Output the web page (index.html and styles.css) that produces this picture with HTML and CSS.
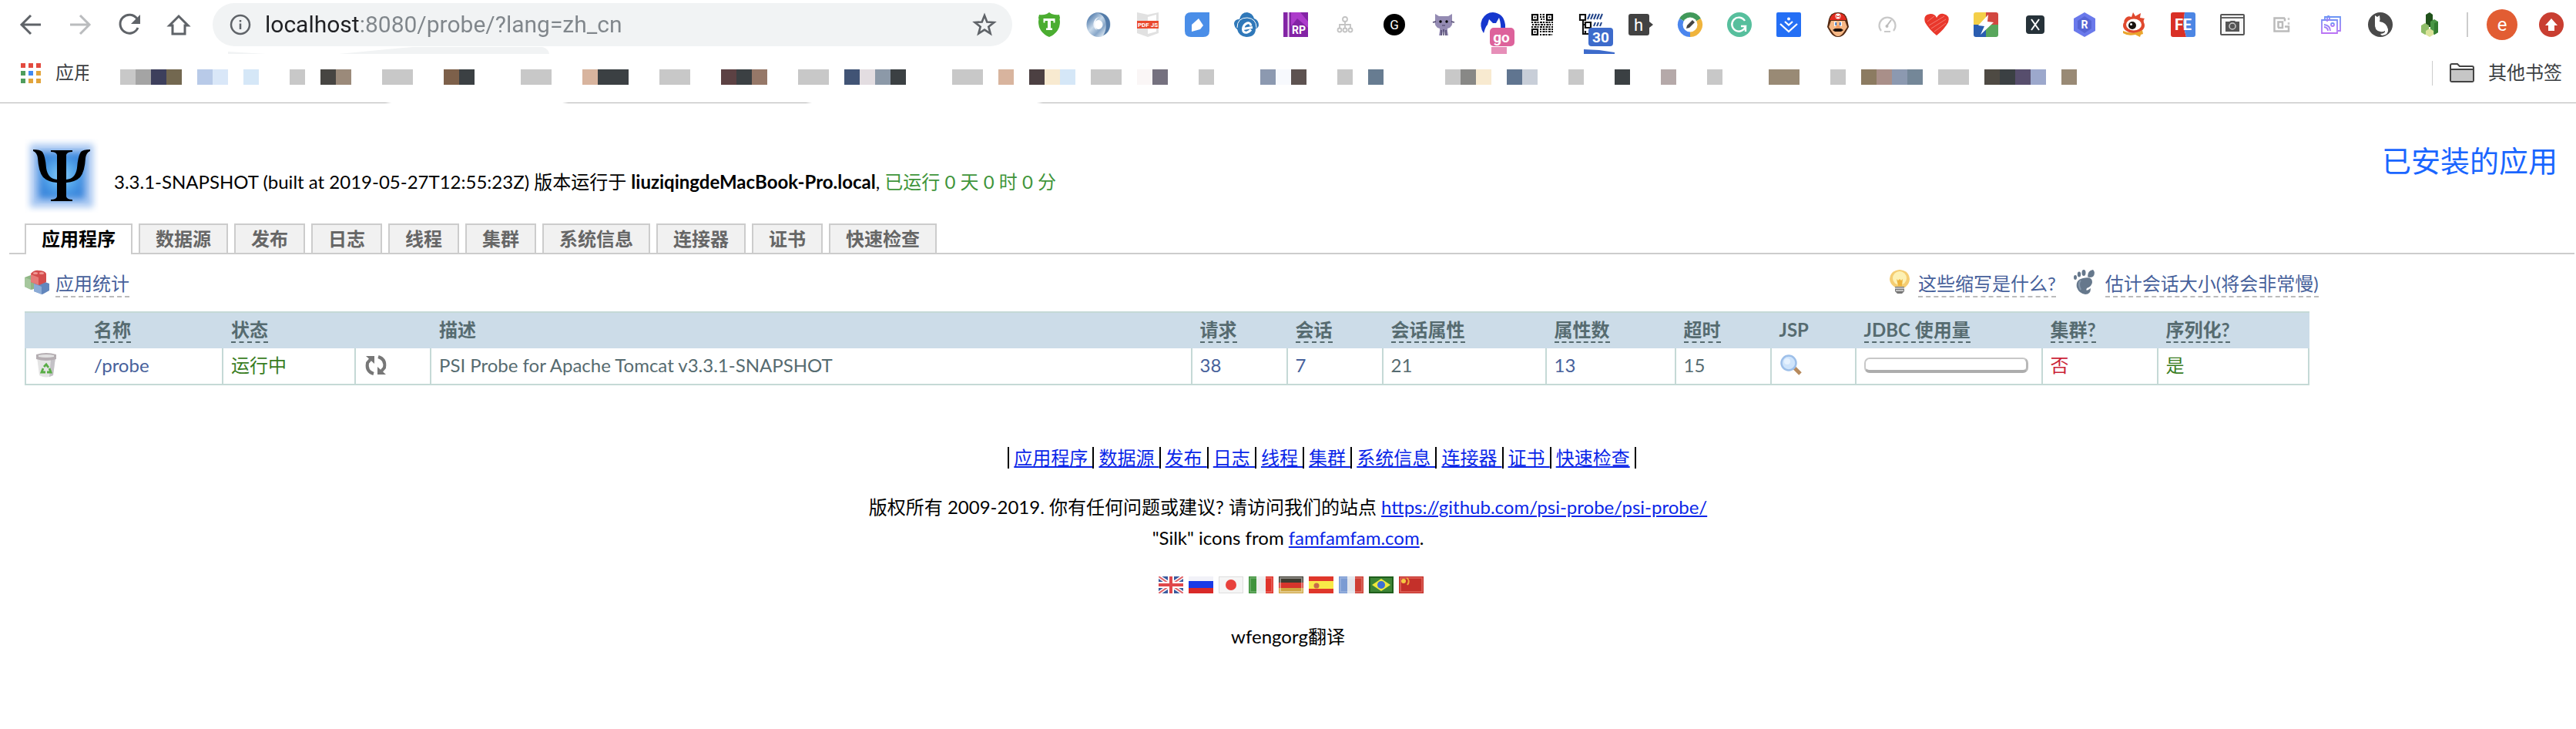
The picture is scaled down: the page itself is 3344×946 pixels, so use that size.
FILE: index.html
```html
<!DOCTYPE html>
<html lang="zh-CN">
<head>
<meta charset="utf-8">
<title>PSI Probe</title>
<link rel="stylesheet" href="styles.css">
</head>
<body>
<header class="browser">
  <div class="toolbar">
    <div class="nav-buttons">
      <button class="icon-btn" aria-label="后退"><svg width="32" height="32" viewBox="0 0 32 32"><path d="M29 16H5M16 4L4 16l12 12" fill="none" stroke="#5f6368" stroke-width="3"/></svg></button>
      <button class="icon-btn" aria-label="前进"><svg width="32" height="32" viewBox="0 0 32 32"><path d="M3 16h24M16 4l12 12-12 12" fill="none" stroke="#babcbe" stroke-width="3"/></svg></button>
      <button class="icon-btn" aria-label="刷新"><svg width="32" height="32" viewBox="0 0 32 32"><path d="M26 8.500A12 12 0 1 0 27 20" fill="none" stroke="#5f6368" stroke-width="3"/><path d="M30 3v12H18z" fill="#5f6368"/></svg></button>
      <button class="icon-btn" aria-label="主页"><svg width="32" height="32" viewBox="0 0 32 32"><path d="M4 17L16 5l12 12h-4v11H8V17z" fill="none" stroke="#5f6368" stroke-width="3"/></svg></button>
    </div>
    <div class="omnibox">
      <svg width="28" height="28" viewBox="0 0 28 28"><circle cx="14" cy="14" r="12" fill="none" stroke="#5f6368" stroke-width="2.500"/><path d="M14 12.500V20M14 8v2.500" stroke="#5f6368" stroke-width="2.500"/></svg>
      <input class="url" type="text" aria-label="地址" value="localhost:8080/probe/?lang=zh_cn">
      <button class="icon-btn" aria-label="收藏"><svg width="32" height="32" viewBox="0 0 32 32"><path d="M16 4l3.300 8.500 9.100.5-7.100 5.700 2.400 8.900L16 22.600l-7.700 5 2.400-8.900L3.600 13l9.100-.5z" fill="none" stroke="#5f6368" stroke-width="2.600"/></svg></button>
      <svg class="smudge" width="418" height="10" viewBox="0 0 418 10"><path d="M0 6l49 3H0zM144 9L222 1.500 240 0H408q8 2 9 9z" fill="#f1f3f4"/></svg>
    </div>
    <div class="extensions">
      <svg viewBox="0 0 32 32"><path d="M16 0l3 2q6 2 10 1l1 4q-1 2 0 5 0 14-14 20Q2 26 2 12q1-3 0-5l1-4q5 1 10-1z" fill="#4bad31"/><path d="M8.500 8h15v5.500H21.500V11h-3.500v9.500h2V23h-8v-2.500h2V11h-3.500v2.500H8.500z" fill="#fff"/></svg>
      <svg viewBox="0 0 32 32"><defs><linearGradient id="jr" x1="0" y1="0" x2="1" y2="1"><stop offset="0" stop-color="#5f86b3"/><stop offset=".4" stop-color="#c9daea"/><stop offset=".7" stop-color="#88a7c9"/><stop offset="1" stop-color="#dfeaf3"/></linearGradient></defs><ellipse cx="16" cy="16" rx="10.500" ry="11" fill="none" stroke="url(#jr)" stroke-width="10"/><path d="M17 6c-6 3-7 12-3 17-7-3-6-15 3-17z" fill="#f1f6fb"/><path d="M16 1c9-1 15 6 15 15 0 7-4 12-9 14 6-8 6-24-6-29z" fill="#537ba8"/></svg>
      <svg viewBox="0 0 32 32"><path d="M2 0l14 3L30 0v27l-14 5L2 27z" fill="#e1e1e1"/><path d="M16 6l11-3v22l-11 3z" fill="#fff"/><rect x="2" y="11" width="28" height="10" fill="#ea4a2e"/><text x="16" y="19" class="svg-t" font-size="8">PDF JS</text></svg>
      <svg viewBox="0 0 32 32"><path d="M8 0h24v24q0 8-8 8H8q-8 0-8-8V8q0-8 8-8z" fill="#4a8ee8"/><path d="M9 16l9-8 6 9-4 5-11 3z" fill="#fff"/></svg>
      <svg viewBox="0 0 32 32"><path d="M7 9Q9 0 17 0q7 1 9 8 6 2 6 9-1 4-4 4 0 11-12 11Q6 31 4 22 0 19 0 14q1-5 7-5z" fill="#2f78b9"/><path d="M4 20Q4 7 17 7q12 1 12 13" fill="none" stroke="#fff" stroke-width="1"/><path d="M22 17.500q-1-4.500-5-3.500-5 2-5.500 8 0 5 5.500 4 3-1 5-3.500M12 21.500l12-2" fill="none" stroke="#fff" stroke-width="3"/></svg>
      <svg viewBox="0 0 32 32"><path d="M0 0h32v32H0z" fill="#8324a5"/><path d="M10 0h12l10 12v8L18 8 10 18z" fill="#ad3ccb"/><path d="M5.500 0h2v32h-2z" fill="#f0d8f5"/><text x="20" y="28" class="svg-t" font-size="14">RP</text></svg>
      <svg viewBox="0 0 32 32"><g fill="none" stroke="#c3c3c3" stroke-width="1.800"><circle cx="16" cy="9" r="3"/><circle cx="9" cy="23" r="2.500"/><circle cx="16" cy="23" r="2.500"/><circle cx="23" cy="23" r="2.500"/><path d="M16 12v8M9 20v-4h14v4"/></g></svg>
      <svg viewBox="0 0 32 32"><circle cx="16" cy="16" r="14" fill="#000"/><text x="16" y="22" class="svg-t light" font-size="17">G</text></svg>
      <svg viewBox="0 0 32 32"><path d="M5 2l5 3h12l5-3v8q2 9-6 11v3l1 6h-4l-1-5h-2l-1 5h-4l1-6v-3Q3 19 5 10z" fill="#948bb3"/><path d="M13 23v7M16 22v8M19 23v7M2 13l4-1M26 12l4 1" stroke="#50486f" stroke-width="1.500"/><circle cx="12" cy="12" r="1.700"/><circle cx="20" cy="12" r="1.700"/><path d="M14 17h4" stroke="#443c60"/></svg>
      <svg viewBox="0 0 32 32"><path d="M4 27Q-2 18 2 9 7 0 16 0q14 1 16 16v5H6z" fill="#1637ce"/><path d="M6 26q-1-6 3-10l2-7 5 5h4l4-7q3 8 2 19z" fill="#fff"/><rect x="12" y="20" width="32" height="24" rx="5" fill="#dd629b"/><path d="M14 45h20v9H14z" fill="#e68eb8"/><text x="27" y="39" class="svg-t" font-size="19">go</text></svg>
      <svg viewBox="0 0 32 32"><g fill="none" stroke="#000" stroke-width="2.200"><path d="M3 3h7v7H3zM22 3h7v7h-7zM3 22h7v7H3z"/><path stroke-dasharray="2 1.500 3 1" d="M13 3h6M13 6h6M14 9h5M2 13h28M3 16h27M2 19h28M13 22h17M13 25h17M13 29h16"/></g><path d="M5.500 5.500h2v2h-2zM24.500 5.500h2v2h-2zM5.500 24.500h2v2h-2z"/></svg>
      <svg viewBox="0 0 32 32"><g fill="none" stroke="#111" stroke-width="2.200"><path d="M1 3h7v7H1zM8 13h7v7H8zM5 10v18h7M5 16h3M8 24v4"/></g><g stroke="#1f4287" stroke-width="2"><path d="M11 9l3-7M15 9l3-7M19 9l3-7M23 9l3-7M27 9l3-7M19 18l2-5M23 18l2-5M27 18l2-5"/></g><rect x="12" y="20" width="32" height="24" rx="4" fill="#3d6bcb"/><path d="M6 48l20 1 20 3v2H6z" fill="#3d6bcb"/><text x="28" y="39" class="svg-t" font-size="19">30</text></svg>
      <svg viewBox="0 0 32 32"><path d="M3 2h21q3 0 3 3v7l5 4-5 4v7q0 3-3 3H3q-3 0-3-3V5q0-3 3-3z" fill="#424242"/><text x="13" y="24" class="svg-t light" font-size="22">h</text></svg>
      <svg viewBox="0 0 32 32"><path d="M16 16L2.100 8A16 16 0 0 1 29.900 8z" fill="#41995a"/><path d="M16 16L29.900 8A16 16 0 0 1 16 32z" fill="#f0b43c"/><path d="M16 16v16A16 16 0 0 1 2.100 8z" fill="#4b86ee"/><circle cx="16" cy="16" r="9.500" fill="#fff"/><path d="M11 21l1-4 7-7 3 3-7 7z" fill="#444"/></svg>
      <svg viewBox="0 0 32 32"><circle cx="16" cy="16" r="16" fill="#57bf9d"/><path d="M23 11a9 9 0 1 0 1 7h-6M24 17v8" fill="none" stroke="#fff" stroke-width="2.400"/></svg>
      <svg viewBox="0 0 32 32"><rect width="32" height="32" rx="2" fill="#246ff5"/><circle cx="16" cy="8.500" r="2" fill="#fff"/><path d="M11 12l5 4.500 5-4.500M5 15l11 10 11-10" fill="none" stroke="#fff" stroke-width="2.200"/></svg>
      <svg viewBox="0 0 32 32"><path d="M16 0q10 0 12 9l2 10-4 7q-4 6-10 6T6 26l-4-7 2-10Q6 0 16 0z" fill="#542a12"/><path d="M16 1q9 0 11 9H5Q7 1 16 1z" fill="#e22a1e"/><circle cx="16" cy="5" r="3.500" fill="#fff"/><path d="M14 7V4l2 2 2-2v3" fill="none" stroke="#e22a1e"/><path d="M7 11h18l3 8-4 6q-4 6-8 6t-8-6l-4-6z" fill="#f6b785"/><path d="M11 12h3v6h-3zM18 12h3v6h-3z" fill="#fff"/><path d="M12.500 13h1.500v4h-1.500zM18 13h1.500v4H18z" fill="#175bb6"/><path d="M9 23l3-2h8l3 2-3 2h-8z" fill="#1d100a"/><ellipse cx="16" cy="19" rx="3" ry="2" fill="#ee9c65"/></svg>
      <svg viewBox="0 0 32 32"><path d="M8 24a10.500 10.500 0 1 1 16 0M12 25h8" fill="none" stroke="#c9c9c9" stroke-width="2.200"/><path d="M15 18l6-8" stroke="#bbb" stroke-width="2"/><circle cx="15.500" cy="18" r="2" fill="#bbb"/></svg>
      <svg viewBox="0 0 32 32"><path d="M16 30Q6 22 1 13-2 3 8 2q6 0 8 5 3-6 9-5 9 2 6 11-5 9-15 17z" fill="#e9382c"/><path d="M4 12l9-7M6 17L26 5M9 21l19-12M13 25l15-11" stroke="#f58c84" stroke-width=".8"/></svg>
      <svg viewBox="0 0 32 32"><path d="M3 0h13v16H0V3q0-3 3-3z" fill="#f4cf48"/><path d="M16 0h13q3 0 3 3v13H16z" fill="#d24740"/><path d="M0 16h16v16H3q-3 0-3-3z" fill="#2a5db0"/><path d="M16 16h16v13q0 3-3 3H16z" fill="#58a65c"/><path d="M19 3L6 17l8 1-5 11L26 13l-8-1z" fill="#fff"/></svg>
      <svg viewBox="0 0 32 32"><rect x="4" y="4" width="24" height="24" rx="4" fill="#263239"/><path d="M11 9l10 14M21 9L11 23" stroke="#fff" stroke-width="2"/></svg>
      <svg viewBox="0 0 32 32"><path d="M16 0l14 8v16l-14 8L2 24V8z" fill="#6a79eb"/><path d="M16 5l9 6v10l-9 6-9-6V11z" fill="#5564d4"/><text x="16" y="21" class="svg-t" font-size="14">R</text></svg>
      <svg viewBox="0 0 32 32"><path d="M3 12Q6 3 13 6l2-6 3 5 7-4-1 6 6 1q-2 2-1 6z" fill="#e0492e"/><ellipse cx="16" cy="17" rx="14" ry="10" fill="#e0492e"/><ellipse cx="16" cy="16" rx="10" ry="7.500" fill="#fff"/><circle cx="14" cy="17" r="5" fill="#191311"/><circle cx="12.500" cy="15.500" r="1.500" fill="#fff"/><path d="M2 24q13 6 25-1l1 5-3 1-1 3-6-3Q8 31 2 27z" fill="#eaa52c"/></svg>
      <svg viewBox="0 0 32 32"><path d="M3 0h15l-2 16 4 16H3q-3 0-3-3V3q0-3 3-3z" fill="#d93026"/><path d="M18 0h11q3 0 3 3v26q0 3-3 3h-9l-4-16z" fill="#4c86e4"/><text x="16" y="23" class="svg-t" font-size="20">FE</text></svg>
      <svg viewBox="0 0 32 32"><rect x="1" y="3" width="30" height="26" rx="1" fill="#f6f6f6" stroke="#555" stroke-width="2"/><path d="M2 7h28" stroke="#666" stroke-width="2"/><path d="M7 12h5l2-1h5l1 1h5v13H7z" fill="#555"/><circle cx="16" cy="18" r="4" fill="none" stroke="#ccc" stroke-width="1.500"/></svg>
      <svg viewBox="0 0 32 32"><path d="M20 7.500H6.500v17H25V18.500H20M20 7.500v4M11.500 20v-7.500h5.500v7.500H11" fill="none" stroke="#bbb" stroke-width="2.500"/><path d="M25 7v3M25 13v3" stroke="#ccc" stroke-width="2.500"/></svg>
      <svg viewBox="0 0 32 32"><defs><linearGradient id="pu" x1="0" y1="0" x2="0" y2="1"><stop offset="0" stop-color="#6b95f5"/><stop offset="1" stop-color="#bb73f5"/></linearGradient></defs><g fill="none" stroke="url(#pu)" stroke-width="1.800"><path d="M4 10h20v17H4zM8 9V6h20v18h-3M7 19q5 1 5 5M7 16q8 1 8 8"/><circle cx="18" cy="16" r="2"/><path d="M11 12V6q2-2 3 0v5"/></g></svg>
      <svg viewBox="0 0 32 32"><circle cx="16" cy="16" r="16" fill="#4a4a4a"/><path d="M9 4l3 2 3-2q1 5 0 8 9 1 11 10 1 7-8 8l-2-2q7-1 6-4-3 2-6 1Q8 24 9 14z" fill="#fff"/></svg>
      <svg viewBox="0 0 32 32"><path d="M11 3l5-3 4 3v16h-9z" fill="#20521b"/><path d="M17 12l5-3 5 3v14l-5 3-5-3z" fill="#499645"/><path d="M22 14l5-2v14l-5 3z" fill="#337c31"/><path d="M5 17l5-3 5 3v10l-5 2-5-3z" fill="#8fbd68"/><path d="M11 24l5-3 5 3v5l-5 3-5-3z" fill="#dbe39a"/></svg>
    </div>
    <div class="profile">
      <button class="avatar" aria-label="用户">e</button>
      <button class="icon-btn" aria-label="更新"><svg width="32" height="32" viewBox="0 0 32 32"><circle cx="16" cy="16" r="16" fill="#c93e31"/><path d="M16 8l8 9h-4v7h-8v-7H8z" fill="#fff"/></svg></button>
    </div>
  </div>
  <div class="bookmarks">
    <svg class="apps" width="26" height="26" viewBox="0 0 26 26"><path d="M0 0h6v6H0zM10 0h6v6h-6zM20 0h6v6h-6z" fill="#e34a3f"/><path d="M0 10h6v6H0zM0 20h6v6H0z" fill="#4f9d5d"/><path d="M10 10h6v6h-6z" fill="#4189f0"/><path d="M20 10h6v6h-6zM10 20h6v6h-6zM20 20h6v6h-6z" fill="#e2a43b"/></svg>
    <a class="apps-label" href="#">应用</a>
    <div class="mosaic">
      <svg width="2540" height="20" viewBox="0 0 127 1" preserveAspectRatio="none" shape-rendering="crispEdges">
        <path fill="#c8c8c8" d="M0 0h1v1H0zM11 0h1v1h-1zM17 0h2v1h-2zM26 0h2v1h-2zM35 0h2v1h-2zM44 0h2v1h-2zM54 0h2v1h-2zM63 0h2v1h-2zM70 0h1v1h-1zM79 0h1v1h-1zM86 0h1v1h-1zM94 0h1v1h-1zM103 0h1v1h-1zM111 0h1v1h-1zM118 0h2v1h-2z"/>
        <path fill="#3b4043" d="M22 0h1v1h-1zM31 0h2v1h-2zM40 0h1v1h-1zM50 0h1v1h-1zM97 0h1v1h-1zM122 0h1v1h-1z"/>
        <path fill="#a4a4a4" d="M1 0h1v1H1z"/><path fill="#3d3f5c" d="M2 0h1v1H2z"/><path fill="#736850" d="M3 0h1v1H3z"/>
        <path fill="#b8cae8" d="M5 0h1v1H5z"/><path fill="#d9e7f8" d="M6 0h1v1H6z"/><path fill="#d5e7f7" d="M8 0h1v1H8zM61 0h1v1h-1z"/>
        <path fill="#474542" d="M13 0h1v1h-1z"/><path fill="#9b8a7a" d="M14 0h1v1h-1z"/><path fill="#7d604a" d="M21 0h1v1h-1z"/>
        <path fill="#d8b49e" d="M30 0h1v1h-1zM57 0h1v1h-1z"/><path fill="#5c4143" d="M39 0h1v1h-1z"/><path fill="#967868" d="M41 0h1v1h-1z"/>
        <path fill="#415475" d="M47 0h1v1h-1z"/><path fill="#e3dde1" d="M48 0h1v1h-1z"/><path fill="#8c99a8" d="M49 0h1v1h-1z"/>
        <path fill="#4c4042" d="M59 0h1v1h-1z"/><path fill="#f8ead0" d="M60 0h1v1h-1zM88 0h1v1h-1z"/>
        <path fill="#faf6f6" d="M66 0h1v1h-1z"/><path fill="#75717f" d="M67 0h1v1h-1z"/>
        <path fill="#8c99b0" d="M74 0h1v1h-1zM115 0h1v1h-1z"/><path fill="#f7f9fd" d="M75 0h1v1h-1z"/><path fill="#5d5250" d="M76 0h1v1h-1z"/>
        <path fill="#677c91" d="M81 0h1v1h-1z"/><path fill="#888886" d="M87 0h1v1h-1z"/><path fill="#607590" d="M90 0h1v1h-1z"/><path fill="#c8ced8" d="M91 0h1v1h-1z"/>
        <path fill="#b5a9a9" d="M100 0h1v1h-1z"/><path fill="#998a75" d="M107 0h2v1h-2zM126 0h1v1h-1z"/><path fill="#8c7b61" d="M113 0h1v1h-1z"/><path fill="#a98f89" d="M114 0h1v1h-1z"/><path fill="#748798" d="M116 0h1v1h-1z"/>
        <path fill="#4e4a43" d="M121 0h1v1h-1z"/><path fill="#574e6d" d="M123 0h1v1h-1z"/><path fill="#9ca8cc" d="M124 0h1v1h-1z"/>
      </svg>
    </div>
    <a class="other" href="#"><svg width="32" height="26" viewBox="0 0 32 26"><path d="M1 22V3q0-2 2-2h7l3 3h16q2 0 2 2v16q0 2-2 2H3q-2 0-2-2z" fill="#fff" stroke="#444" stroke-width="2"/><path d="M2 9h28v14H2z" fill="#c6c6c6"/><path d="M1 8h30" stroke="#444" stroke-width="2"/></svg>其他书签</a>
  </div>
  <div class="edge"></div>
</header>

<main>
  <div class="masthead">
    <svg class="logo" width="96" height="96" viewBox="0 0 96 96"><defs><radialGradient id="sky"><stop offset="0" stop-color="#8ed0f8"/><stop offset=".55" stop-color="#55a8ec"/><stop offset="1" stop-color="#3a86dc"/></radialGradient><filter id="soft"><feGaussianBlur stdDeviation="4"/></filter></defs><rect x="7" y="7" width="82" height="82" fill="#a9c8f2" filter="url(#soft)"/><rect x="18" y="18" width="60" height="60" fill="url(#sky)" filter="url(#soft)"/><path d="M34 15h28v2q-7 0-8 4v32q12-1 14-15 1-15 5-21 3-3 12-3v2q-5 2-6 9-1 18-7 25-6 6-18 7v18q1 4 8 4v2H34v-2q7 0 8-4V57q-12-1-18-7-6-7-7-25-1-7-6-9v-2q9 0 12 3 4 6 5 21 2 14 14 15V21q-1-4-8-4z"/></svg>
    <p class="version">3.3.1-SNAPSHOT (built at 2019-05-27T12:55:23Z) 版本运行于 <b>liuziqingdeMacBook-Pro.local</b>, <span class="uptime">已运行 0 天 0 时 0 分</span></p>
    <h1 class="title">已安装的应用</h1>
  </div>
  <nav class="tabs">
    <a class="tab active" href="#">应用程序</a><a class="tab" href="#">数据源</a><a class="tab" href="#">发布</a><a class="tab" href="#">日志</a><a class="tab" href="#">线程</a><a class="tab" href="#">集群</a><a class="tab" href="#">系统信息</a><a class="tab" href="#">连接器</a><a class="tab" href="#">证书</a><a class="tab" href="#">快速检查</a>
  </nav>
  <section class="content">
    <div class="actions">
      <svg width="32" height="32" viewBox="0 0 32 32"><path d="M0 10l8-3 9 3v13l-8 3-9-4z" fill="#8fb584"/><path d="M0 10l8 3v13l-8-4z" fill="#a6c79d"/><path d="M12 18l9-4 11 4v9l-9 5-11-4z" fill="#6287bd"/><path d="M12 18l10 4v10l-10-4z" fill="#8cabd6"/><path d="M8 5q5-5 10-4 8 0 10 4v11l-9 4-11-4z" fill="#d44d4d"/><path d="M8 6l10 4v10L8 16z" fill="#e57b78"/><ellipse cx="14" cy="4.500" rx="3" ry="1.500" fill="#ee9894"/><ellipse cx="22" cy="4.500" rx="3" ry="1.500" fill="#ee9894"/></svg>
      <a class="dashed" href="#">应用统计</a>
      <svg class="push" width="32" height="32" viewBox="0 0 32 32"><path d="M16 0q12 1 13 12 0 6-6 11H10Q3 18 3 12 4 1 16 0z" fill="#f5cd72"/><circle cx="16" cy="11" r="9" fill="#fdf1b4"/><path d="M12 12l2 9h5l1-9-2 2-2-2-2 2z" fill="#eeb43d"/><path d="M10 22h12v6l-3 3h-6l-3-3z" fill="#777"/><path d="M10 24h12M11 27h10" stroke="#ddd" stroke-width="1.500"/></svg>
      <a class="dashed" href="#">这些缩写是什么?</a>
      <svg class="foot" width="32" height="32" viewBox="0 0 32 32"><g fill="#66788c"><path d="M28 0q4 4 0 9-4 2-7 0 0-8 7-9z"/><ellipse cx="16" cy="4" rx="2.500" ry="4" /><ellipse cx="10" cy="6" rx="2.200" ry="3.500"/><ellipse cx="5" cy="10" rx="2" ry="3"/><path d="M15 11q12-3 12 5 0 5-7 8-2 4 2 2l3-2q0 8-7 8Q10 31 7 23 5 13 15 11z"/></g><path d="M12 14q-4 4 0 12" fill="none" stroke="#8799ac" stroke-width="2"/></svg>
      <a class="dashed" href="#">估计会话大小(将会非常慢)</a>
    </div>
    <table class="apps-table">
      <colgroup><col class="c80"><col class="c176"><col class="c172"><col class="c98"><col><col class="c124"><col class="c124"><col class="c212"><col class="c168"><col class="c124"><col class="c110"><col class="c242"><col class="c150"><col class="c198"></colgroup>
      <thead><tr><th></th><th class="joined"><a href="#">名称</a></th><th><a href="#">状态</a></th><th></th><th>描述</th><th><a href="#">请求</a></th><th><a href="#">会话</a></th><th><a href="#">会话属性</a></th><th><a href="#">属性数</a></th><th><a href="#">超时</a></th><th>JSP</th><th><a href="#">JDBC 使用量</a></th><th><a href="#">集群?</a></th><th><a href="#">序列化?</a></th></tr></thead>
      <tbody><tr>
        <td><button class="icon-btn" aria-label="卸载"><svg width="32" height="32" viewBox="0 0 32 32"><path d="M4 5l3 24q9 5 18 0l3-24z" fill="#e4e4e4"/><path d="M22 8l6-2-3 23-5 2z" fill="#c3c1c6"/><path d="M3 2q13-4 26 0v6q-13 4-26 0z" fill="#b5aeb2"/><path d="M6 3q10-2 20 0v2q-10 2-20 0z" fill="#e2e2e2"/><path d="M13 18l3-3 3 4M12 20l-2 5h5M20 20l2 5h-5" fill="none" stroke="#58ad45" stroke-width="2.800"/></svg></button></td>
        <td class="joined"><a href="#">/probe</a></td>
        <td><a class="ok" href="#">运行中</a></td>
        <td><button class="icon-btn" aria-label="重新加载"><svg width="32" height="32" viewBox="0 0 32 32"><path d="M13 27Q3 24 5 13l5-6M19 5q10 3 8 14l-5 6" fill="none" stroke="#777" stroke-width="4"/><path d="M3 4h11v10zM29 28H18V18z" fill="#777"/></svg></button></td>
        <td>PSI Probe for Apache Tomcat v3.3.1-SNAPSHOT</td>
        <td><a href="#">38</a></td><td><a href="#">7</a></td><td>21</td><td><a href="#">13</a></td><td>15</td>
        <td><button class="icon-btn" aria-label="查看 JSP"><svg width="32" height="32" viewBox="0 0 32 32"><path d="M19 19l8 8" stroke="#b78a5c" stroke-width="5"/><circle cx="12" cy="13" r="9.500" fill="#cfe4fb" stroke="#9dbfe9" stroke-width="2.500"/><circle cx="10" cy="11" r="4" fill="#e6f2ff"/></svg></button></td>
        <td><div class="usage" role="progressbar" aria-label="JDBC 使用量" aria-valuenow="0"></div></td>
        <td><span class="no">否</span></td><td><span class="ok">是</span></td>
      </tr></tbody>
    </table>
  </section>
</main>

<footer class="footer">
  <ul class="foot-nav">
    <li><a href="#">应用程序&nbsp;</a></li><li><a href="#">数据源&nbsp;</a></li><li><a href="#">发布&nbsp;</a></li><li><a href="#">日志&nbsp;</a></li><li><a href="#">线程&nbsp;</a></li><li><a href="#">集群&nbsp;</a></li><li><a href="#">系统信息&nbsp;</a></li><li><a href="#">连接器&nbsp;</a></li><li><a href="#">证书&nbsp;</a></li><li><a href="#">快速检查</a></li>
  </ul>
  <p>版权所有 2009-2019. 你有任何问题或建议? 请访问我们的站点 <a href="#">https://github.com/psi-probe/psi-probe/</a></p>
  <p>"Silk" icons from <a href="#">famfamfam.com</a>.</p>
  <div class="flags">
    <a href="#" aria-label="English"><svg viewBox="0 0 32 22"><path d="M0 0h32v22H0z" fill="#3a5a9e"/><path d="M0 0l32 22M32 0L0 22" stroke="#fff" stroke-width="5"/><path d="M0 0l32 22M32 0L0 22" stroke="#e0656a" stroke-width="2"/><path d="M16 0v22M0 11h32" stroke="#fff" stroke-width="8"/><path d="M16 0v22M0 11h32" stroke="#e0474b" stroke-width="4"/></svg></a>
    <a href="#" aria-label="Русский"><svg viewBox="0 0 32 22"><path d="M0 0h32v6H0z" fill="#f2f2f8"/><path d="M0 6h32v9H0z" fill="#1a3be6"/><path d="M0 15h32v7H0z" fill="#d92a28"/></svg></a>
    <a href="#" aria-label="日本語"><svg viewBox="0 0 32 22"><path d="M0 0h32v22H0z" fill="#dedede"/><path d="M1 1h30v20H1z" fill="#f5f5f5"/><circle cx="16" cy="11" r="7" fill="#e8413c"/></svg></a>
    <a href="#" aria-label="Italiano"><svg viewBox="0 0 32 22"><path d="M0 0h11v22H0z" fill="#3f933c"/><path d="M10 0h12v22H10z" fill="#eee"/><path d="M22 0h10v22H22z" fill="#e0332a"/><path d="M2 2h28v18H2z" fill="none" stroke="#fff" stroke-opacity=".25" stroke-width="1.500"/></svg></a>
    <a href="#" aria-label="Deutsch"><svg viewBox="0 0 32 22"><path d="M0 0h32v8H0z" fill="#3d3a30"/><path d="M0 8h32v7H0z" fill="#d6342c"/><path d="M0 15h32v7H0z" fill="#cfa53f"/><path d="M2 2h28v18H2z" fill="none" stroke="#fff" stroke-opacity=".4" stroke-width="2"/></svg></a>
    <a href="#" aria-label="Español"><svg viewBox="0 0 32 22"><path d="M0 0h32v22H0z" fill="#e0372b"/><path d="M0 6h32v10H0z" fill="#f8e948"/><circle cx="10" cy="12" r="3.500" fill="#c86a4a"/></svg></a>
    <a href="#" aria-label="Français"><svg viewBox="0 0 32 22"><path d="M0 0h11v22H0z" fill="#7b9bd3"/><path d="M11 0h10v22H11z" fill="#e2e5ec"/><path d="M21 0h11v22H21z" fill="#cf3f35"/><path d="M2 2h28v18H2z" fill="none" stroke="#fff" stroke-opacity=".25" stroke-width="1.500"/></svg></a>
    <a href="#" aria-label="Português"><svg viewBox="0 0 32 22"><path d="M0 0h32v22H0z" fill="#1f5e1c"/><path d="M2 2h28v18H2z" fill="#3d8436"/><path d="M4 11l12-8 12 8-12 8z" fill="#eee83c"/><circle cx="16" cy="11" r="5" fill="#3d6fd4"/></svg></a>
    <a href="#" aria-label="中文"><svg viewBox="0 0 32 22"><path d="M0 0h32v22H0z" fill="#c4302a"/><path d="M2 2h28v18H2z" fill="none" stroke="#e0645c" stroke-width="1.500"/><circle cx="6" cy="6" r="3" fill="#f5c842"/><path d="M10 2q5 3 1 9" fill="none" stroke="#f0a83c" stroke-width="2"/></svg></a>
  </div>
  <p class="translator">wfengorg翻译</p>
</footer>
</body>
</html>
```
FILE: styles.css
```css
* { box-sizing: border-box; }
body {
  margin: 0;
  background: #fff;
  color: #000;
  font: 24px/40px "Trebuchet MS", Lato, "Noto Sans CJK SC", sans-serif;
}
p, h1, ul { margin: 0; padding: 0; }
svg { display: block; flex: none; }
.icon-btn { display: block; flex: none; padding: 0; border: 0; background: none; cursor: pointer; }

/* Browser chrome */
.browser { font-family: Roboto, "Noto Sans CJK SC", sans-serif; }
.toolbar { display: flex; align-items: center; height: 64px; padding: 0 16px 0 24px; }
.nav-buttons { display: flex; gap: 32px; margin-right: 28px; }
.omnibox {
  position: relative;
  flex: 1;
  display: flex;
  align-items: center;
  height: 56px;
  padding: 0 20px 0 22px;
  border-radius: 28px;
  background: #f1f3f4;
}
.smudge { position: absolute; left: 20px; top: 57px; }
.url {
  flex: 1;
  min-width: 0;
  margin: 0 18px;
  padding: 0;
  border: 0;
  outline: 0;
  font: 30px/40px Roboto, sans-serif;
  color: transparent;
  background: linear-gradient(90deg, #202124 124px, #80868b 124px);
  -webkit-background-clip: text;
  background-clip: text;
}
.extensions { display: flex; gap: 32px; margin: 0 32px; }
.extensions svg { width: 32px; height: 32px; overflow: visible; }
.svg-t { fill: #fff; font-family: Roboto, sans-serif; font-weight: 700; text-anchor: middle; }
.svg-t.light { font-weight: 400; }
.profile { display: flex; align-items: center; gap: 28px; height: 32px; padding-left: 24px; border-left: 2px solid #ccc; }
.avatar { width: 40px; height: 40px; padding: 0; border: 0; border-radius: 50%; background: #e25d33; color: #fff; font: 24px/36px Roboto, sans-serif; }
.bookmarks { display: flex; align-items: center; height: 62px; padding: 0 18px 0 27px; }
.bookmarks a { color: #3c4043; text-decoration: none; white-space: nowrap; }
.apps-label { width: 43px; margin: 0 41px 0 19px; overflow: hidden; }
.mosaic { flex: 1; min-width: 0; margin-top: 10px; overflow: hidden; }
.other { display: flex; align-items: center; gap: 18px; height: 32px; padding-left: 22px; border-left: 1px solid #ccc; }
.edge {
  height: 8px;
  background: linear-gradient(90deg, #b4b4b4 500px, #fff 508px, #fff 730px, #b4b4b4 738px, #b4b4b4 1046px, #fff 1054px, #fff 1346px, #b4b4b4 1354px) bottom / 100% 1px no-repeat;
}

/* Masthead and tabs */
.masthead { display: flex; padding: 46px 24px 0 32px; }
.version { margin: 36px 0 0 20px; }
.uptime { color: #3f953b; }
.title { margin-left: auto; padding-top: 8px; font-size: 38px; font-weight: 400; color: #1a66ff; }
.tabs { display: flex; gap: 8px; margin: 14px 2px 0 12px; padding-left: 20px; border-bottom: 2px solid #ccc; }
.tab {
  height: 38px;
  padding: 0 20px;
  border: 2px solid #ccc;
  border-bottom: 0;
  background: #f1f1f1;
  color: #666;
  font-weight: 700;
  line-height: 36px;
  text-decoration: none;
}
.tab.active { height: 40px; margin-bottom: -2px; background: #fff; color: #000; }

/* Application list */
.content { width: 90%; padding-left: 32px; }
.actions { display: flex; align-items: center; gap: 8px; height: 74px; }
.actions svg { margin-bottom: 2px; }
.dashed { margin-top: 4px; border-bottom: 2px dashed #bbb; line-height: 32px; color: #47619b; text-decoration: none; }
.push { margin-left: auto; }
.foot { margin-left: 12px; margin-right: 4px; }
.apps-table { width: calc(100% - 12px); table-layout: fixed; border-spacing: 0; border: solid #c5d9d6; border-width: 2px 0; color: #566b70; }
.apps-table th { height: 46px; padding: 0 0 2px 12px; background: #ccdce8; line-height: 32px; text-align: left; white-space: nowrap; }
.apps-table th a { display: inline-block; border-bottom: 2px dashed #566b70; color: inherit; text-decoration: none; line-height: 30px; }
.apps-table td { height: 46px; padding: 0 0 2px 10px; border-left: 2px solid #c5d9d6; white-space: nowrap; }
.apps-table td:last-child { border-right: 2px solid #c5d9d6; }
.apps-table .joined { border-left: 0; padding-left: 10px; }
.apps-table td a { color: #47619b; text-decoration: none; }
.apps-table td .ok { color: #397d1f; }
.apps-table td .no { color: #cb2438; }
.usage { width: 213px; height: 20px; border: 2px solid #c8c8c8; border-bottom: 4px solid #adadad; border-right: 3px solid #b8b8b8; border-radius: 7px; background: #fff; }
.c80 { width: 80px; } .c98 { width: 98px; } .c110 { width: 110px; } .c124 { width: 124px; }
.c150 { width: 150px; } .c168 { width: 168px; } .c172 { width: 172px; } .c176 { width: 176px; }
.c198 { width: 198px; } .c212 { width: 212px; } .c242 { width: 242px; }

/* Footer */
.footer { padding-top: 80px; text-align: center; }
.footer a { color: #0a26e8; }
.foot-nav { display: flex; justify-content: center; margin-bottom: 30px; padding-left: 88px; list-style: none; line-height: 28px; }
.foot-nav li { padding-left: 6px; border-left: 2px solid #000; }
.foot-nav li:last-child { padding-right: 6px; border-right: 2px solid #000; }
.flags { display: flex; justify-content: center; gap: 7px; padding: 30px 0 36px 8px; }
.flags svg { width: 32px; height: 22px; }
```
